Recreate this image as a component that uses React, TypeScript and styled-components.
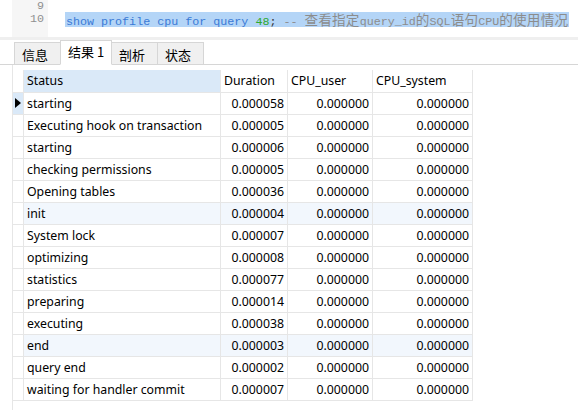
import React from 'react'
import styled, { createGlobalStyle } from 'styled-components'

const GlobalStyle = createGlobalStyle`
  html, body { margin: 0; padding: 0; background: #fff; }
  body { width: 578px; height: 410px; overflow: hidden; }
`

type ProfileRow = { status: string; duration: string; user: string; system: string }

const rows: ProfileRow[] = [
  ['starting', '0.000058'],
  ['Executing hook on transaction', '0.000005'],
  ['starting', '0.000006'],
  ['checking permissions', '0.000005'],
  ['Opening tables', '0.000036'],
  ['init', '0.000004'],
  ['System lock', '0.000007'],
  ['optimizing', '0.000008'],
  ['statistics', '0.000077'],
  ['preparing', '0.000014'],
  ['executing', '0.000038'],
  ['end', '0.000003'],
  ['query end', '0.000002'],
  ['waiting for handler commit', '0.000007'],
].map(([status, duration]) => ({ status, duration, user: '0.000000', system: '0.000000' }))

const tabs = [
  { label: '信息', w: 47 },
  { label: '结果 1', w: 52 },
  { label: '剖析', w: 47 },
  { label: '状态', w: 47 },
]

export default function App() {
  return (
    <Page>
      <GlobalStyle />
      <Editor>
        <Gutter>
          <LineNo $first>9</LineNo>
          <LineNo>10</LineNo>
        </Gutter>
        <Code>
          <CodeLine $first />
          <CodeLine>
            <Selected>
              <Kw>show profile cpu for query</Kw> <Num>48</Num>;{' '}
              <Comment>
                -- <Cjk>查看指定</Cjk>query_id<Cjk>的</Cjk>SQL<Cjk>语句</Cjk>CPU<Cjk>的使用情况</Cjk>
              </Comment>
            </Selected>
          </CodeLine>
        </Code>
      </Editor>
      <Divider />
      <TabBar>
        {tabs.map((t, i) => (
          <Tab key={t.label} $active={i === 1} $w={t.w}>
            {t.label}
          </Tab>
        ))}
      </TabBar>
      <Body>
        <Grid>
          <thead>
            <tr>
              <Marker $head />
              <Head $w={197} $sorted>Status</Head>
              <Head $w={67}>Duration</Head>
              <Head $w={85}>CPU_user</Head>
              <Head $w={100}>CPU_system</Head>
            </tr>
          </thead>
          <tbody>
            {rows.map((r, i) => (
              <Row key={i} $hl={i === 5 || i === 11}>
                <Marker $current={i === 0}>{i === 0 && <Arrow />}</Marker>
                <Cell>{r.status}</Cell>
                <Cell $num>{r.duration}</Cell>
                <Cell $num>{r.user}</Cell>
                <Cell $num>{r.system}</Cell>
              </Row>
            ))}
          </tbody>
        </Grid>
      </Body>
    </Page>
  )
}

const Page = styled.div`
  width: 578px;
  height: 410px;
  display: flex;
  flex-direction: column;
  font-family: 'Noto Sans', 'Noto Sans CJK SC', sans-serif;
  color: #000;
`

const Editor = styled.div`
  display: flex;
  height: 37px;
  padding-left: 12px;
`

const Gutter = styled.div`
  width: 36px;
  background: #f6f6f6;
  display: flex;
  flex-direction: column;
  align-items: flex-end;
  padding-right: 4px;
  box-sizing: border-box;
`

const LineNo = styled.div<{ $first?: boolean }>`
  height: ${p => (p.$first ? 12 : 15)}px;
  line-height: ${p => (p.$first ? 12 : 15)}px;
  font-family: 'Liberation Mono', monospace;
  font-size: 11.7px;
  color: #909090;
`

const Code = styled.div`
  padding-left: 17px;
  display: flex;
  flex-direction: column;
`

const CodeLine = styled.div<{ $first?: boolean }>`
  height: ${p => (p.$first ? 12 : 15)}px;
  line-height: 15px;
  white-space: pre;
  font-family: 'Liberation Mono', monospace;
  font-size: 11.7px;
  color: #333;
`

const Selected = styled.span`
  background: #b4d5f7;
  padding: 0 1px;
  display: inline-block;
  height: 15px;
`

const Kw = styled.span`
  color: #3a7ad6;
`

const Num = styled.span`
  color: #2ea82e;
`

const Comment = styled.span`
  color: #8c8c8c;
`

const Cjk = styled.span`
  font-family: 'Noto Sans CJK SC', sans-serif;
  font-size: 13.6px;
  line-height: 15px;
  letter-spacing: 0.2px;
`

const Divider = styled.div`
  height: 3px;
  background: #efefef;
`

const TabBar = styled.div`
  display: flex;
  align-items: flex-end;
  height: 24px;
  padding-left: 14px;
  border-bottom: 1px solid #d6d6d6;
`

const Tab = styled.div<{ $active?: boolean; $w: number }>`
  box-sizing: border-box;
  width: ${p => p.$w}px;
  height: ${p => (p.$active ? 25 : 22)}px;
  margin-bottom: ${p => (p.$active ? -1 : 0)}px;
  padding: ${p => (p.$active ? '2px 0 0 7px' : '3px 0 0 7px')};
  background: ${p => (p.$active ? '#fff' : '#f0f0f0')};
  border: 1px solid #d6d6d6;
  border-bottom: ${p => (p.$active ? '1px solid #fff' : 'none')};
  font-size: 13px;
  line-height: 17px;
  font-family: 'Noto Sans CJK SC', sans-serif;
  white-space: nowrap;
  & + & { margin-left: -1px; }
`

const Body = styled.div`
  flex: 1;
  margin-left: 12px;
  border-left: 1px solid #e6e6e6;
  padding-top: 5px;
`

const Grid = styled.table`
  border-collapse: collapse;
  table-layout: fixed;
  font-size: 12.3px;
`

const Head = styled.th<{ $w: number; $sorted?: boolean }>`
  width: ${p => p.$w}px;
  height: 22px;
  padding: 0 0 0 3px;
  box-sizing: border-box;
  text-align: left;
  font-weight: normal;
  background: ${p => (p.$sorted ? '#dae9f8' : '#fff')};
  border: 1px solid #e6e6e6;
  border-top: none;
`

const Marker = styled.td<{ $head?: boolean; $current?: boolean }>`
  width: 10px;
  padding: 0;
  height: 21px;
  background: ${p => (p.$current ? '#dae9f8' : '#fff')};
  border: 1px solid #e6e6e6;
  border-left: none;
  border-top: ${p => (p.$head ? 'none' : '1px solid #e6e6e6')};
`

const Arrow = styled.span`
  display: block;
  margin-left: 2px;
  width: 0;
  height: 0;
  border-top: 5px solid transparent;
  border-bottom: 5px solid transparent;
  border-left: 6px solid #000;
`

const Row = styled.tr<{ $hl?: boolean }>`
  background: ${p => (p.$hl ? '#f2f7fd' : '#fff')};
`

const Cell = styled.td<{ $num?: boolean }>`
  height: 21px;
  padding: 0 ${p => (p.$num ? 3 : 0)}px 0 3px;
  text-align: ${p => (p.$num ? 'right' : 'left')};
  border: 1px solid #e6e6e6;
  white-space: nowrap;
  overflow: hidden;
`
